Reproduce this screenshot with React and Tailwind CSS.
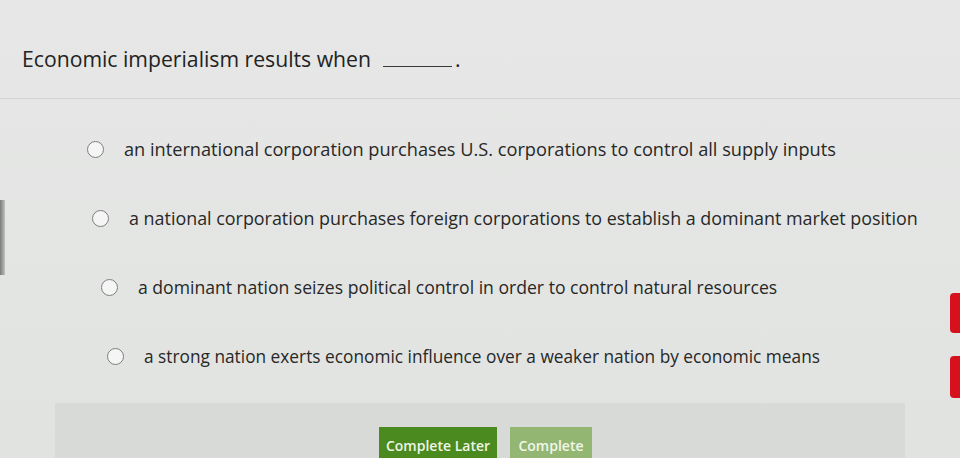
import React from 'react';

const options = [
  { text: 'an international corporation purchases U.S. corporations to control all supply inputs', pad: 'pl-[87px]', size: 'text-[18.2px]' },
  { text: 'a national corporation purchases foreign corporations to establish a dominant market position', pad: 'pl-[92px]', size: 'text-[17.9px]' },
  { text: 'a dominant nation seizes political control in order to control natural resources', pad: 'pl-[101px]', size: 'text-[17.6px]' },
  { text: 'a strong nation exerts economic influence over a weaker nation by economic means', pad: 'pl-[107px]', size: 'text-[17.3px]' },
];

function Option({ text, pad, size }) {
  return (
    <label className={`flex items-center h-[69px] gap-[20px] ${pad}`}>
      <span className="w-[17px] h-[17px] shrink-0 rounded-full border-[1.5px] border-[#7c7f7c] bg-[#f4f5f4]" />
      <span className={`${size} text-[#272827] whitespace-nowrap`}>{text}</span>
    </label>
  );
}

export default function App() {
  return (
    <div
      className="relative w-[960px] h-[458px] overflow-hidden bg-gradient-to-b from-[#e6e7e6] to-[#e1e3e1] flex flex-col"
      style={{ fontFamily: '"Open Sans", "Liberation Sans", sans-serif' }}
    >
      {/* question */}
      <div className="pl-[22px] flex items-end h-[99px] pb-[29px] border-b border-[#d3d5d3]">
        <h2 className="text-[21.2px] text-[#222322] leading-none whitespace-nowrap">
          Economic imperialism results when
          <span className="inline-block ml-[12px] w-[69px] border-b-[1.5px] border-[#3a3a3a] align-baseline" />
          <span className="ml-[3px]">.</span>
        </h2>
      </div>

      {/* answers */}
      <div className="flex flex-col pt-[16px]">
        {options.map((o) => (
          <Option key={o.text} {...o} />
        ))}
      </div>

      {/* footer bar */}
      <div className="mt-auto ml-[55px] mr-[55px] h-[55px] bg-[#d8dad8] flex items-start pt-[24px] pl-[324px] gap-[13px]">
        <button className="h-[36px] w-[118px] bg-[#4b8a1f] text-[#eef5e6] text-[14px] font-semibold">
          Complete Later
        </button>
        <button className="h-[36px] w-[82px] bg-[#94b673] text-[#f1f6ea] text-[14px] font-semibold">
          Complete
        </button>
      </div>

      {/* screen edge details */}
      <div className="absolute left-0 top-[200px] w-[5px] h-[75px] bg-gradient-to-r from-[#7a7c7a] to-[#c0c2c0]" />
      <div className="absolute right-0 top-[293px] w-[10px] h-[40px] rounded-l-[4px] bg-[#d6101c]" />
      <div className="absolute right-0 top-[356px] w-[10px] h-[42px] rounded-l-[4px] bg-[#d6101c]" />
    </div>
  );
}
